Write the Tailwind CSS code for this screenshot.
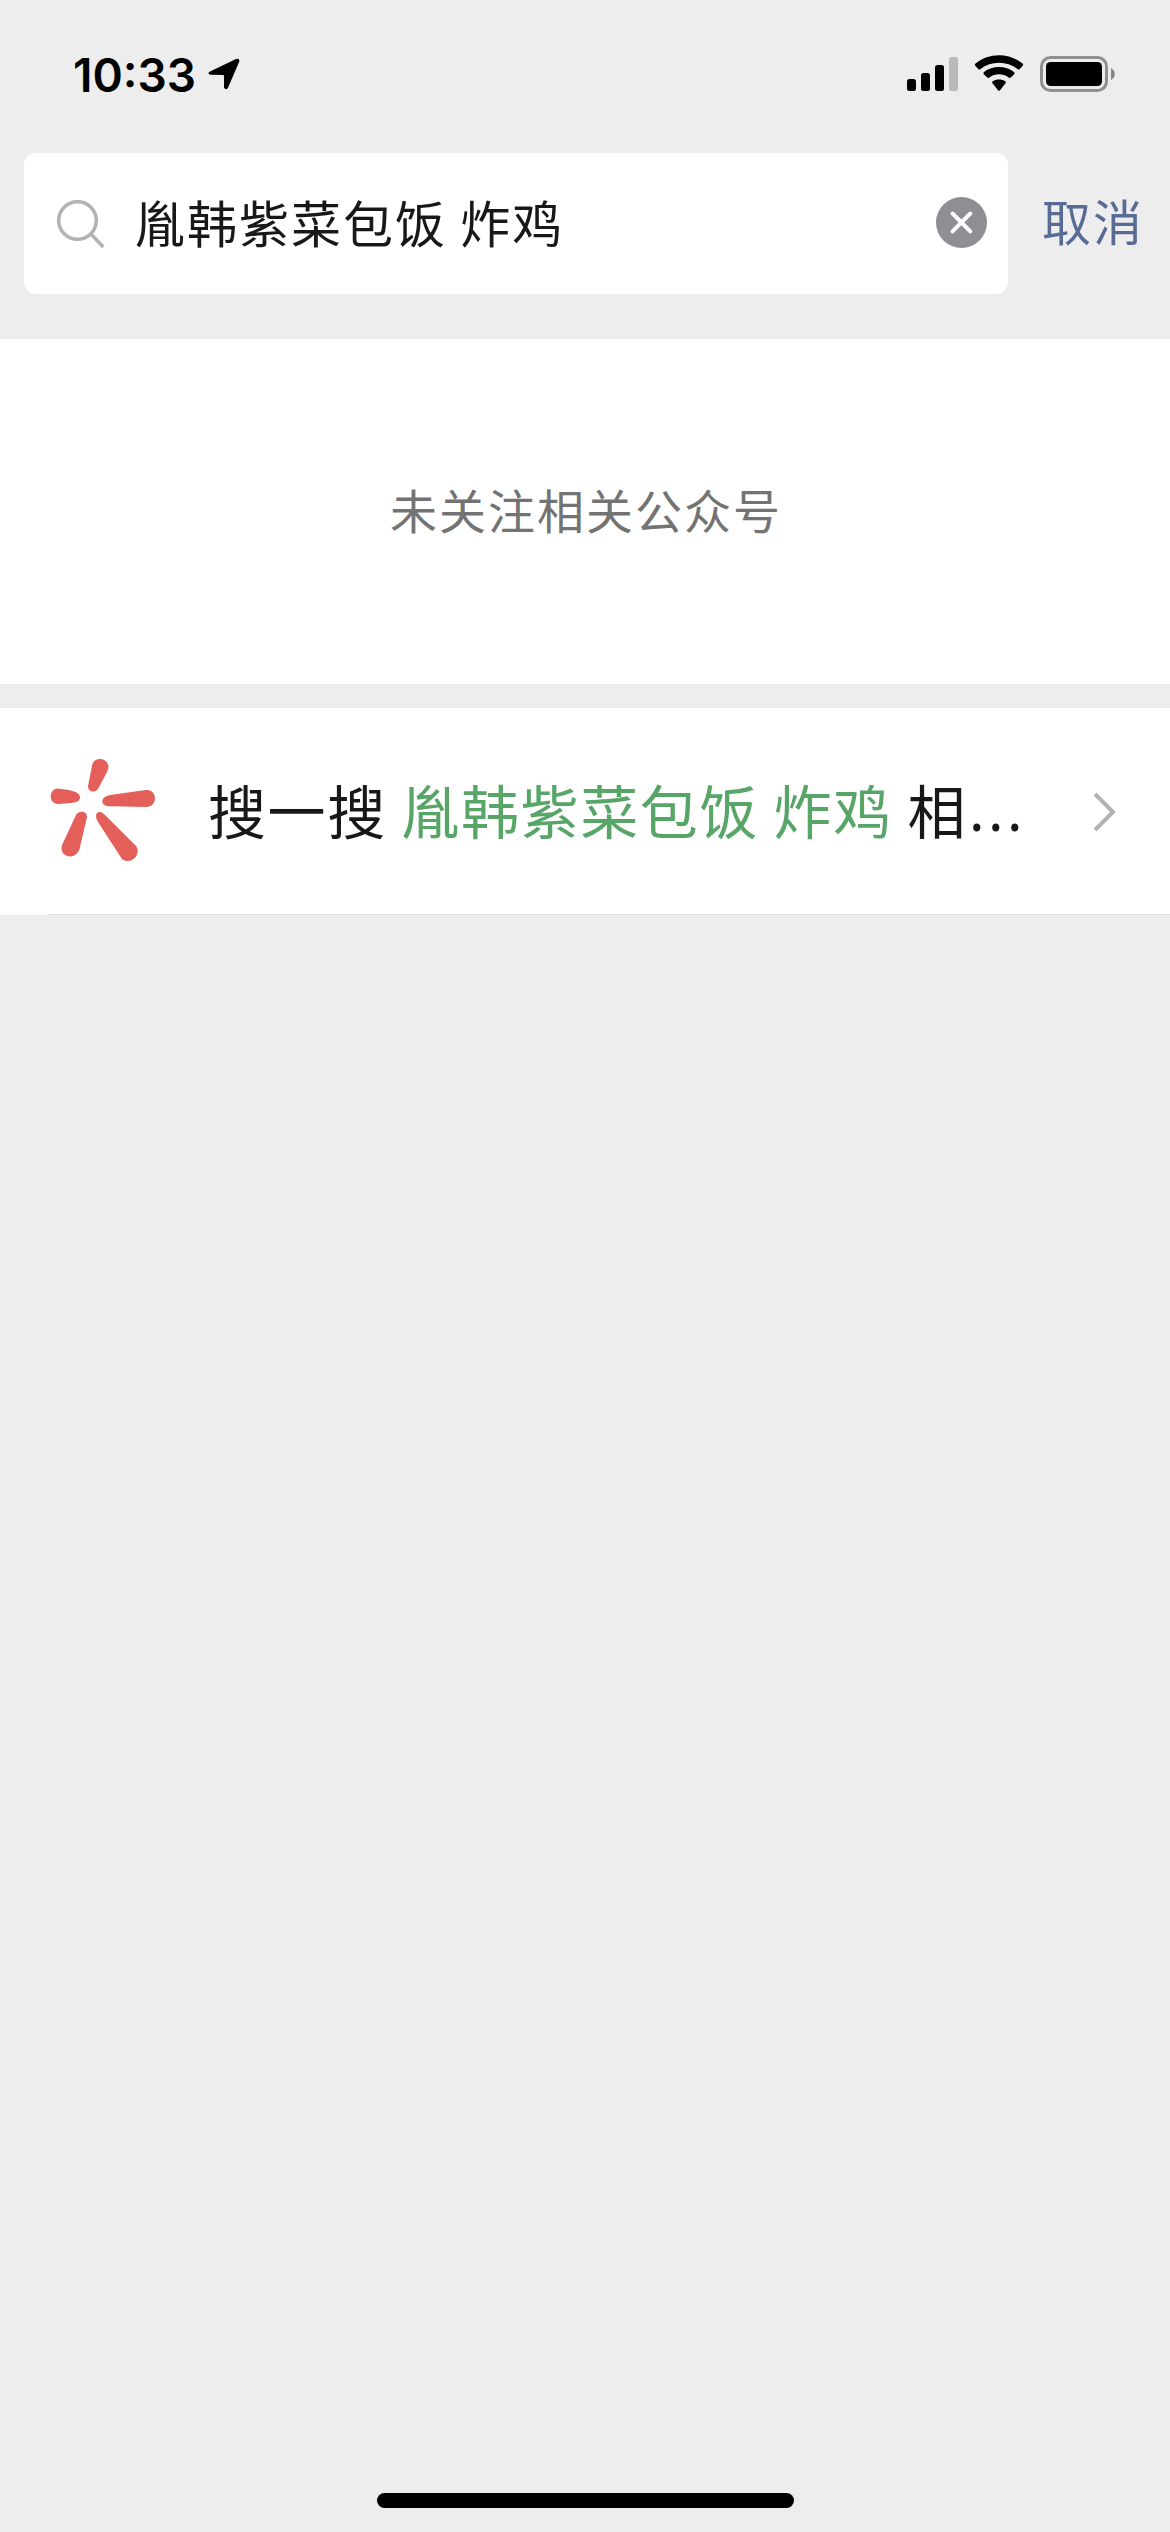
<!DOCTYPE html>
<html lang="zh-CN">
<head>
    <meta charset="utf-8"/>
    <meta content="width=device-width, initial-scale=1.0" name="viewport"/>
    <title>搜索</title>
    <script src="https://cdn.jsdelivr.net/npm/@tailwindcss/browser@4"></script>
</head>
<body class="bg-[#ededed] font-['Noto_Sans_CJK_SC',sans-serif] text-[#181818]">
    <div class="flex flex-col w-[1170px] h-[2532px] overflow-hidden">
        <!-- Status Bar -->
        <header class="flex justify-between h-[153px] shrink-0 pl-[73px] pr-[54px] pt-[50px] text-black">
            <div class="flex items-start">
                <span class="w-[128px] text-[46px] leading-[50px] font-semibold whitespace-nowrap font-['Inter',sans-serif]">10:33</span>
                <svg class="w-8 h-8 mt-2 ml-[7px]" viewBox="0 0 32 32">
                    <path d="M2 13.500 28 1Q31.800-.3 31.300 3.600L20 29.800Q17.800 33 16 29.500V18Q15.900 17 15 17L2.500 16.800Q-1.500 15.500 2 13.500Z" fill="currentColor"/>
                </svg>
            </div>
            <div class="flex items-start pt-[5px]">
                <svg class="w-[52px] h-[38px]" viewBox="0 0 52 38">
                    <rect x="0" y="24" width="9" height="12" rx="2.500"/>
                    <rect x="14" y="18" width="9" height="18" rx="2.500"/>
                    <rect x="28" y="10" width="9" height="26" rx="2.500"/>
                    <rect x="42" y="2" width="9" height="34" rx="2.500" fill="#bababa"/>
                </svg>
                <svg class="w-[50px] h-[38px] ml-[15px]" viewBox="0 0 50 38">
                    <path d="M1.500 11Q.2 9.800 1.500 8.600C14.500-2.700 35.500-2.700 48.500 8.600Q49.800 9.800 48.500 11L45.800 14Q44.800 15 43.500 14C33 5.800 17 5.800 6.500 14Q5.200 15 4.200 14Z"/>
                    <path d="M9.800 19.200Q8.800 18.200 10 17.100C18.500 10.300 31.500 10.300 40 17.100Q41.200 18.200 40.200 19.200L36.800 22.600Q35.800 23.500 34.600 22.600C29 18.200 21 18.200 15.400 22.600Q14.200 23.500 13.200 22.600Z"/>
                    <path d="M18.500 28.300Q17.300 27.200 18.700 26.300C22.500 24 27.500 24 31.300 26.300Q32.700 27.200 31.500 28.300L26 35.200Q25 36.300 24 35.200Z"/>
                </svg>
                <svg class="w-[76px] h-[38px] ml-[16px]" viewBox="0 0 76 38">
                    <rect x="1.500" y="2.500" width="65" height="33" rx="9" fill="none" stroke="#909090" stroke-width="3"/>
                    <rect x="6" y="7" width="56" height="24" rx="4.500"/>
                    <path d="M71 13C76 15.500 76 22.500 71 25Z" fill="#858585"/>
                </svg>
            </div>
        </header>

        <!-- Search Bar -->
        <div class="flex h-[186px] shrink-0 pl-6">
            <div class="flex items-center w-[984px] h-[141px] pl-[33px] pr-[21px] rounded-xl bg-white">
                <svg class="w-12 h-12 shrink-0" viewBox="0 0 48 48" fill="none" stroke="#b2b2b2" stroke-width="3.500">
                    <circle cx="20.500" cy="20.500" r="18.800"/>
                    <path d="M34 34 46.300 47"/>
                </svg>
                <span class="grow ml-[30px] pb-[6px] text-[50px] leading-[70px] tracking-[2px] whitespace-nowrap">胤韩紫菜包饭 炸鸡</span>
                <svg class="w-[51px] h-[51px] shrink-0 -mt-0.5" viewBox="0 0 51 51">
                    <circle cx="25.500" cy="25.500" r="25.500" fill="#8e8e93"/>
                    <path d="M16.500 16.500 34.300 34.300M34.300 16.500 16.500 34.300" stroke="#fff" stroke-width="4" stroke-linecap="round"/>
                </svg>
            </div>
            <a class="h-[141px] ml-[34px] text-[49px] leading-[134px] tracking-[2px] text-[#576b95] whitespace-nowrap">取消</a>
        </div>

        <!-- Empty Result -->
        <div class="flex items-center justify-center h-[345px] shrink-0 pb-[4px] pl-[2px] bg-white text-[47px] tracking-[2px] text-[#737373]">未关注相关公众号</div>

        <!-- Search Row -->
        <div class="flex items-center h-[207px] shrink-0 mt-6 pl-[50px] pr-[54px] bg-white">
            <svg class="w-[106px] h-[106px] shrink-0 -mt-[3px]" viewBox="50 757 106 106" fill="#e45f5a">
                <path d="M92 766C93 756 108 757 108.500 767Q108.500 769 107 772L98.500 788C95 794 88 792 88 786Z"/>
                <path d="M58 788.500 69 790C77 791.500 80 794.500 80 797.500C80 801 76 802.500 71 803L58 804C48.500 804 48 789 58 788.500Z"/>
                <path d="M110 795 146 790C157.500 789 158 806.500 147 807L109 806.300C100 806 100 796.500 110 795Z"/>
                <path d="M76 815C79 810 87 811 87 817L79.500 849C76 860 61.500 858 61.500 848Q61.500 847 62.500 844Z"/>
                <path d="M96 816C96 811 101 811 104 814L136 846C142 854 131 866 122 859L98 822Q96 819 96 816Z"/>
            </svg>
            <div class="flex grow ml-[52px] pb-[6px] text-[58px] leading-[84px] tracking-[1.600px] whitespace-pre"><span>搜一搜 </span><span class="text-[#57a668]">胤韩紫菜包饭 炸鸡</span><span> 相</span><span class="ml-0.5 tracking-[3.500px] font-['Noto_Sans',sans-serif]">...</span></div>
            <svg class="w-[23px] h-[40px] shrink-0" viewBox="0 0 23 40" fill="none" stroke="#b2b2b2" stroke-width="4">
                <path d="M2 2 20 20 2 38"/>
            </svg>
        </div>
        <div class="h-px shrink-0 -mt-px ml-12 bg-[#e0e0e0]"></div>

        <!-- Home Indicator -->
        <div class="w-[417px] h-[15px] mt-auto mb-6 mx-auto rounded-full bg-black"></div>
    </div>
</body>
</html>
